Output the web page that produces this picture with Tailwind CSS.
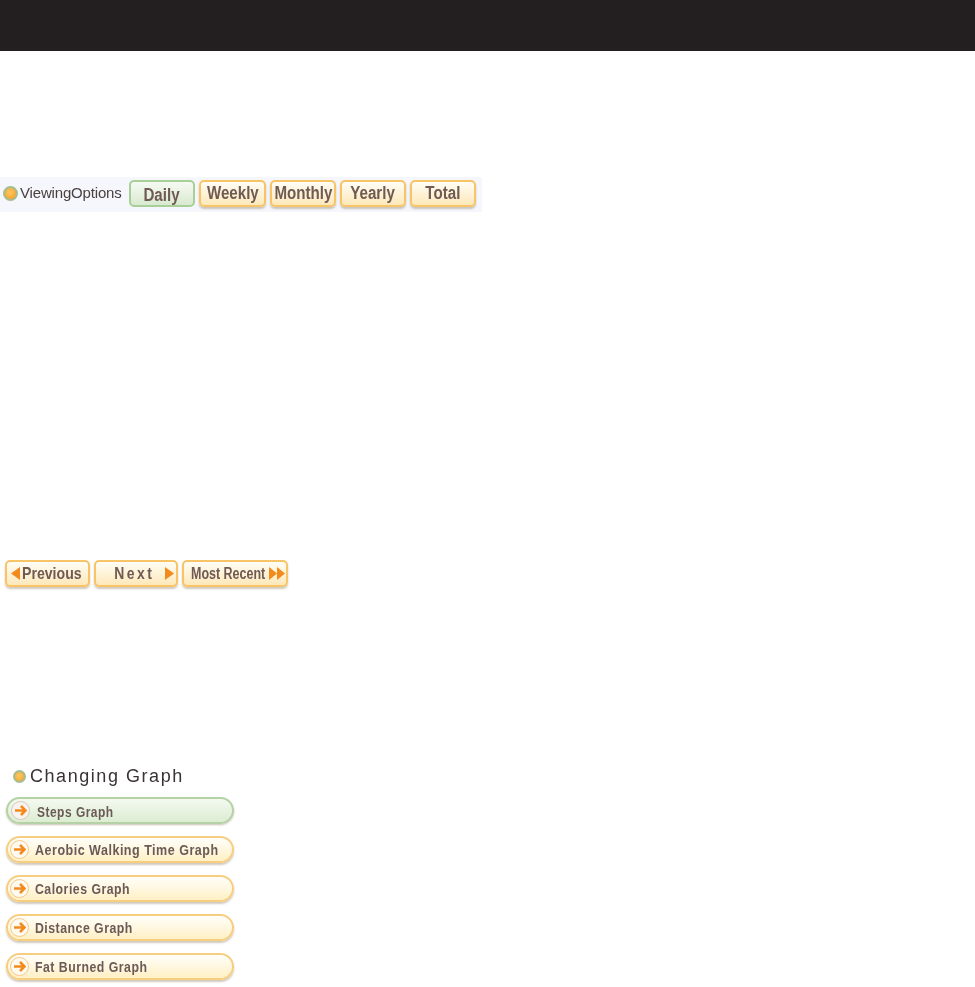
<!DOCTYPE html>
<html>
<head>
<meta charset="utf-8">
<title>Graph</title>
<script src="https://cdn.jsdelivr.net/npm/@tailwindcss/browser@4"></script>
</head>
<body class="bg-white font-['Liberation_Sans',sans-serif]">
  <div class="h-[987px] w-[975px] overflow-hidden">

    <!-- header bar -->
    <div class="h-[51px] bg-[#231f20]"></div>

    <!-- viewing options -->
    <div class="mt-[126px] flex h-[35px] w-[482px] items-start bg-[#f5f7fc] pl-[3px] pt-[3px]">
      <div class="mr-[6px] flex h-[27px] w-[120px] items-center">
        <span class="h-[15px] w-[15px] shrink-0 rounded-full border-2 border-[#a3bd94] bg-[radial-gradient(circle_at_45%_40%,#ffc766,#f39a1c)] blur-[0.3px]"></span>
        <span class="ml-[2px] whitespace-nowrap text-[15px] tracking-[-0.17px] text-[#4a4040] blur-[0.4px]">ViewingOptions</span>
      </div>
      <div class="flex gap-[4px]">
        <button class="flex h-[27px] w-[66px] items-center justify-center rounded-[5px] border-2 border-[#a9cf98] bg-gradient-to-b from-[#f6faf3] to-[#d9eacf] pt-[3px] text-[18px] font-bold text-[#705a52] blur-[0.4px]"><span class="inline-block scale-x-[0.84] whitespace-nowrap">Daily</span></button>
        <button class="flex h-[27px] w-[67px] items-center justify-center rounded-[5px] border-2 border-[#f7c468] bg-gradient-to-b from-[#fffdf5] to-[#fde8b9] text-[18px] font-bold text-[#705a52] shadow-[0_2px_2px_rgba(120,100,70,0.35)] blur-[0.4px]"><span class="inline-block scale-x-[0.84] whitespace-nowrap">Weekly</span></button>
        <button class="flex h-[27px] w-[66px] items-center justify-center rounded-[5px] border-2 border-[#f7c468] bg-gradient-to-b from-[#fffdf5] to-[#fde8b9] text-[18px] font-bold text-[#705a52] shadow-[0_2px_2px_rgba(120,100,70,0.35)] blur-[0.4px]"><span class="inline-block scale-x-[0.84] whitespace-nowrap">Monthly</span></button>
        <button class="flex h-[27px] w-[66px] items-center justify-center rounded-[5px] border-2 border-[#f7c468] bg-gradient-to-b from-[#fffdf5] to-[#fde8b9] text-[18px] font-bold text-[#705a52] shadow-[0_2px_2px_rgba(120,100,70,0.35)] blur-[0.4px]"><span class="inline-block scale-x-[0.84] whitespace-nowrap">Yearly</span></button>
        <button class="flex h-[27px] w-[66px] items-center justify-center rounded-[5px] border-2 border-[#f7c468] bg-gradient-to-b from-[#fffdf5] to-[#fde8b9] text-[18px] font-bold text-[#705a52] shadow-[0_2px_2px_rgba(120,100,70,0.35)] blur-[0.4px]"><span class="inline-block scale-x-[0.84] whitespace-nowrap">Total</span></button>
      </div>
    </div>

    <!-- previous / next -->
    <div class="mt-[348px] flex gap-[4px] pl-[5px]">
      <button class="flex h-[27px] w-[85px] items-center rounded-[5px] border-2 border-[#f7c468] bg-gradient-to-b from-[#fffdf5] to-[#fde8b9] pl-[4px] text-[17px] font-bold text-[#705a52] shadow-[0_2px_2px_rgba(120,100,70,0.35)] blur-[0.4px]">
        <svg class="shrink-0" width="9" height="13" viewBox="0 0 9 13"><path d="M9 0V13L0 6.5Z" fill="#f28a1e"/></svg>
        <span class="ml-[2px] inline-block origin-left scale-x-[0.83] whitespace-nowrap">Previous</span>
      </button>
      <button class="flex h-[27px] w-[84px] items-center rounded-[5px] border-2 border-[#f7c468] bg-gradient-to-b from-[#fffdf5] to-[#fde8b9] pl-[17px] text-[17px] font-bold tracking-[3px] text-[#705a52] shadow-[0_2px_2px_rgba(120,100,70,0.35)] blur-[0.4px]">
        <span class="inline-block w-[52px] origin-left scale-x-[0.82] whitespace-nowrap">Next</span>
        <svg class="shrink-0" width="9" height="13" viewBox="0 0 9 13"><path d="M0 0V13L9 6.5Z" fill="#f28a1e"/></svg>
      </button>
      <button class="flex h-[27px] w-[106px] items-center rounded-[5px] border-2 border-[#f7c468] bg-gradient-to-b from-[#fffdf5] to-[#fde8b9] pl-[7px] text-[16px] font-bold text-[#705a52] shadow-[0_2px_2px_rgba(120,100,70,0.35)] blur-[0.4px]">
        <span class="inline-block w-[78px] origin-left scale-x-[0.78] whitespace-nowrap">Most Recent</span>
        <svg class="shrink-0" width="16" height="13" viewBox="0 0 16 13"><path d="M0 0V13L8 6.5ZM8 0V13L16 6.5Z" fill="#f28a1e"/></svg>
      </button>
    </div>

    <!-- changing graph -->
    <div class="mt-[179px] flex h-[20px] items-center pl-[13px]">
      <span class="h-[13px] w-[13px] rounded-full border-2 border-[#a3bd94] bg-[radial-gradient(circle_at_45%_40%,#ffc766,#eda42c)] blur-[0.3px]"></span>
      <span class="ml-[4px] text-[18px] tracking-[1.55px] text-[#3a3233] blur-[0.3px]">Changing Graph</span>
    </div>

    <div class="ml-[6px] mt-[11px] flex w-[228px] flex-col gap-[12px]">
      <button class="flex h-[27px] items-center rounded-full border-2 border-[#b5d2a6] bg-gradient-to-b from-[#f4f9f0] to-[#dcedd2] pl-[3px] text-[15px] font-bold tracking-[0.6px] text-[#6b5a57] shadow-[0_1px_2px_rgba(120,100,70,0.4)] blur-[0.4px]">
        <span class="flex h-[19px] w-[19px] shrink-0 items-center justify-center rounded-full border border-[#d8cabb] bg-[#f8f3ee]">
          <svg width="13" height="13" viewBox="0 0 13 13"><path d="M1 6.5H11M7 2L11.5 6.5L7 11" fill="none" stroke="#f28a1e" stroke-width="2.6"/></svg>
        </span>
        <span class="ml-[7px] inline-block origin-left scale-x-[0.8] whitespace-nowrap pt-[3px]">Steps Graph</span>
      </button>
      <button class="flex h-[27px] items-center rounded-full border-2 border-[#f7cd80] bg-gradient-to-b from-[#fffefa] to-[#fff0c4] pl-[2px] text-[15px] font-bold tracking-[0.6px] text-[#6b5a57] shadow-[0_2px_2px_rgba(120,100,70,0.35)] blur-[0.4px]">
        <span class="flex h-[19px] w-[19px] shrink-0 items-center justify-center rounded-full border border-[#f5c98a] bg-[#fffaf0]">
          <svg width="13" height="13" viewBox="0 0 13 13"><path d="M1 6.5H11M7 2L11.5 6.5L7 11" fill="none" stroke="#f28a1e" stroke-width="2.6"/></svg>
        </span>
        <span class="ml-[6px] inline-block origin-left scale-x-[0.835] whitespace-nowrap pt-[1px]">Aerobic Walking Time Graph</span>
      </button>
      <button class="flex h-[27px] items-center rounded-full border-2 border-[#f7cd80] bg-gradient-to-b from-[#fffefa] to-[#fff0c4] pl-[2px] text-[15px] font-bold tracking-[0.6px] text-[#6b5a57] shadow-[0_2px_2px_rgba(120,100,70,0.35)] blur-[0.4px]">
        <span class="flex h-[19px] w-[19px] shrink-0 items-center justify-center rounded-full border border-[#f5c98a] bg-[#fffaf0]">
          <svg width="13" height="13" viewBox="0 0 13 13"><path d="M1 6.5H11M7 2L11.5 6.5L7 11" fill="none" stroke="#f28a1e" stroke-width="2.6"/></svg>
        </span>
        <span class="ml-[6px] inline-block origin-left scale-x-[0.82] whitespace-nowrap pt-[1px]">Calories Graph</span>
      </button>
      <button class="flex h-[27px] items-center rounded-full border-2 border-[#f7cd80] bg-gradient-to-b from-[#fffefa] to-[#fff0c4] pl-[2px] text-[15px] font-bold tracking-[0.6px] text-[#6b5a57] shadow-[0_2px_2px_rgba(120,100,70,0.35)] blur-[0.4px]">
        <span class="flex h-[19px] w-[19px] shrink-0 items-center justify-center rounded-full border border-[#f5c98a] bg-[#fffaf0]">
          <svg width="13" height="13" viewBox="0 0 13 13"><path d="M1 6.5H11M7 2L11.5 6.5L7 11" fill="none" stroke="#f28a1e" stroke-width="2.6"/></svg>
        </span>
        <span class="ml-[6px] inline-block origin-left scale-x-[0.82] whitespace-nowrap pt-[1px]">Distance Graph</span>
      </button>
      <button class="flex h-[27px] items-center rounded-full border-2 border-[#f7cd80] bg-gradient-to-b from-[#fffefa] to-[#fff0c4] pl-[2px] text-[15px] font-bold tracking-[0.6px] text-[#6b5a57] shadow-[0_2px_2px_rgba(120,100,70,0.35)] blur-[0.4px]">
        <span class="flex h-[19px] w-[19px] shrink-0 items-center justify-center rounded-full border border-[#f5c98a] bg-[#fffaf0]">
          <svg width="13" height="13" viewBox="0 0 13 13"><path d="M1 6.5H11M7 2L11.5 6.5L7 11" fill="none" stroke="#f28a1e" stroke-width="2.6"/></svg>
        </span>
        <span class="ml-[6px] inline-block origin-left scale-x-[0.82] whitespace-nowrap pt-[1px]">Fat Burned Graph</span>
      </button>
    </div>

  </div>
</body>
</html>
